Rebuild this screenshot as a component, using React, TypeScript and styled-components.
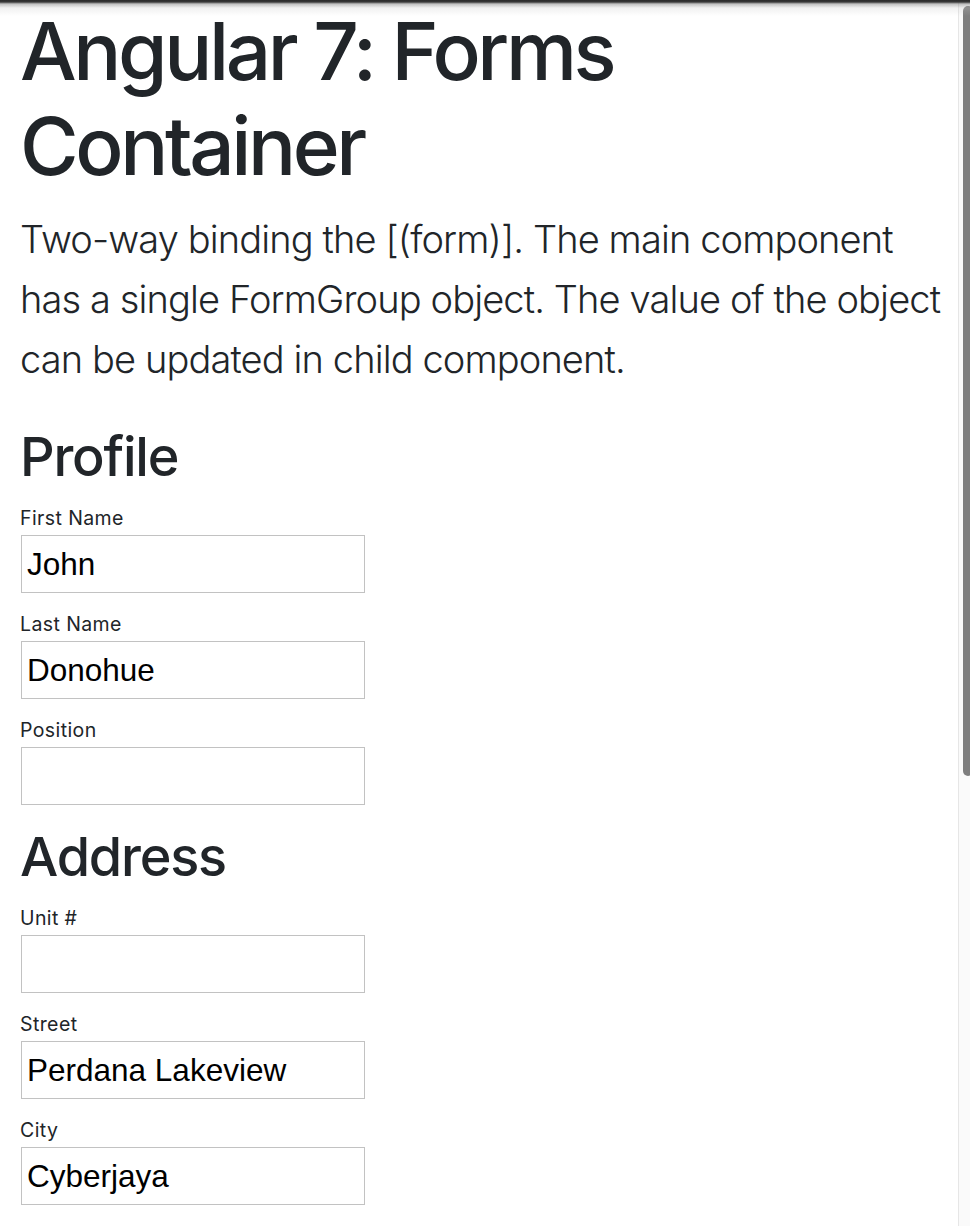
import React from "react";
import styled, { createGlobalStyle } from "styled-components";

const GlobalStyle = createGlobalStyle`
  html, body {
    margin: 0;
    padding: 0;
    background: #ffffff;
    overflow: hidden;
  }
  body {
    font-family: Inter, "Noto Sans", "Liberation Sans", sans-serif;
    color: #212529;
  }
  * { box-sizing: border-box; }
`;

const Page = styled.main`
  padding: 3px 10px 0 20px;
  width: 958px;
`;

const Title = styled.h1`
  margin: 0 0 16px;
  font-size: 80px;
  font-weight: 500;
  line-height: 95px;
  letter-spacing: -3.4px;
`;

const Lead = styled.p`
  margin: 0 0 35px;
  font-size: 38px;
  font-weight: 300;
  line-height: 60px;
  letter-spacing: -0.88px;
`;

const Section = styled.section`
  display: flex;
  flex-direction: column;
  padding-bottom: 19px;
`;

const SectionTitle = styled.h3`
  margin: 0 0 17px;
  font-size: 54px;
  font-weight: 500;
  line-height: 65px;
  letter-spacing: -1.2px;
`;

const Fields = styled.div`
  display: flex;
  flex-direction: column;
  gap: 19px;
`;

const Field = styled.div`
  display: flex;
  flex-direction: column;
  gap: 5px;
`;

const Label = styled.label`
  font-size: 19.5px;
  line-height: 24px;
  letter-spacing: 0.4px;
  color: #212529;
`;

const Input = styled.input`
  width: 344px;
  height: 58px;
  margin-left: 1px;
  padding: 0 5px;
  border: 1px solid #c2c2c2;
  border-radius: 0;
  background: #fff;
  font-family: "Liberation Sans", Arial, sans-serif;
  font-size: 31.5px;
  color: #000;
  outline: none;
`;

const TopShade = styled.div`
  position: fixed;
  top: 0;
  left: 0;
  right: 0;
  height: 16px;
  background: linear-gradient(
    to bottom,
    #2b2b2b 0px,
    #3a3a3a 2px,
    rgba(120, 120, 120, 0.45) 4px,
    rgba(200, 200, 200, 0.25) 8px,
    rgba(255, 255, 255, 0) 16px
  );
  pointer-events: none;
`;

const ScrollTrack = styled.div`
  position: fixed;
  top: 0;
  right: 0;
  bottom: 0;
  width: 12px;
  background: #fafafa;
  border-left: 1px solid #e6e6e6;
`;

const ScrollThumb = styled.div`
  position: absolute;
  top: 6px;
  left: 4px;
  width: 10px;
  height: 770px;
  border-radius: 5px;
  background: #7e7e7e;
`;

type FieldDef = { label: string; value: string };

const profile: FieldDef[] = [
  { label: "First Name", value: "John" },
  { label: "Last Name", value: "Donohue" },
  { label: "Position", value: "" },
];

const address: FieldDef[] = [
  { label: "Unit #", value: "" },
  { label: "Street", value: "Perdana Lakeview" },
  { label: "City", value: "Cyberjaya" },
];

function FormSection({ title, fields }: { title: string; fields: FieldDef[] }) {
  return (
    <Section>
      <SectionTitle>{title}</SectionTitle>
      <Fields>
        {fields.map((f) => (
          <Field key={f.label}>
            <Label>{f.label}</Label>
            <Input defaultValue={f.value} readOnly />
          </Field>
        ))}
      </Fields>
    </Section>
  );
}

export default function App() {
  return (
    <>
      <GlobalStyle />
      <Page>
        <Title>Angular 7: Forms Container</Title>
        <Lead>
          Two-way binding the [(form)]. The main component has a single FormGroup
          object. The value of the object can be updated in child component.
        </Lead>
        <FormSection title="Profile" fields={profile} />
        <FormSection title="Address" fields={address} />
      </Page>
      <ScrollTrack>
        <ScrollThumb />
      </ScrollTrack>
      <TopShade />
    </>
  );
}
